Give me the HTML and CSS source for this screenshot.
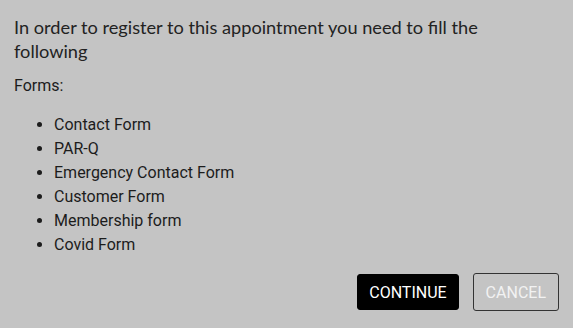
FILE: index.html
```html
<!DOCTYPE html>
<html>
<head>
<meta charset="utf-8">
<link rel="stylesheet" href="styles.css">
</head>
<body>
<div class="dialog">
  <h2 class="title">In order to register to this appointment you need to fill the following</h2>
  <p class="label">Forms:</p>
  <ul class="forms">
    <li>Contact Form</li>
    <li>PAR-Q</li>
    <li>Emergency Contact Form</li>
    <li>Customer Form</li>
    <li>Membership form</li>
    <li>Covid Form</li>
  </ul>
  <div class="actions">
    <button class="btn primary">CONTINUE</button>
    <button class="btn outline">CANCEL</button>
  </div>
</div>
</body>
</html>
```
FILE: styles.css
```css
html, body {
  margin: 0;
  padding: 0;
  background: #c4c4c4;
}
.dialog {
  width: 573px;
  height: 328px;
  box-sizing: border-box;
  padding: 15px 14px 0 14px;
  display: flex;
  flex-direction: column;
  font-family: Roboto, "Liberation Sans", sans-serif;
  color: #1c1c1c;
}
.title {
  margin: 0;
  max-width: 500px;
  font-family: Lato, "Open Sans", sans-serif;
  font-weight: 400;
  font-size: 18.2px;
  line-height: 24px;
  color: #222;
}
.label {
  margin: 14px 0 0 0;
  font-size: 16px;
  line-height: 18px;
}
.forms {
  margin: 18px 0 0 0;
  padding-left: 40px;
  font-size: 16px;
  line-height: 24px;
}
.actions {
  display: flex;
  justify-content: flex-end;
  gap: 14px;
  margin-top: 17px;
}
.btn {
  font-family: Roboto, "Liberation Sans", sans-serif;
  font-size: 16px;
  height: 36px;
  border-radius: 3px;
  padding: 0 11px;
  cursor: pointer;
}
.primary {
  background: #000;
  color: #fff;
  border: 1px solid #000;
}
.outline {
  background: transparent;
  color: #f2f2f2;
  border: 1px solid #333;
  height: 38px;
  margin-top: -1px;
  padding: 0 12px;
}
```
